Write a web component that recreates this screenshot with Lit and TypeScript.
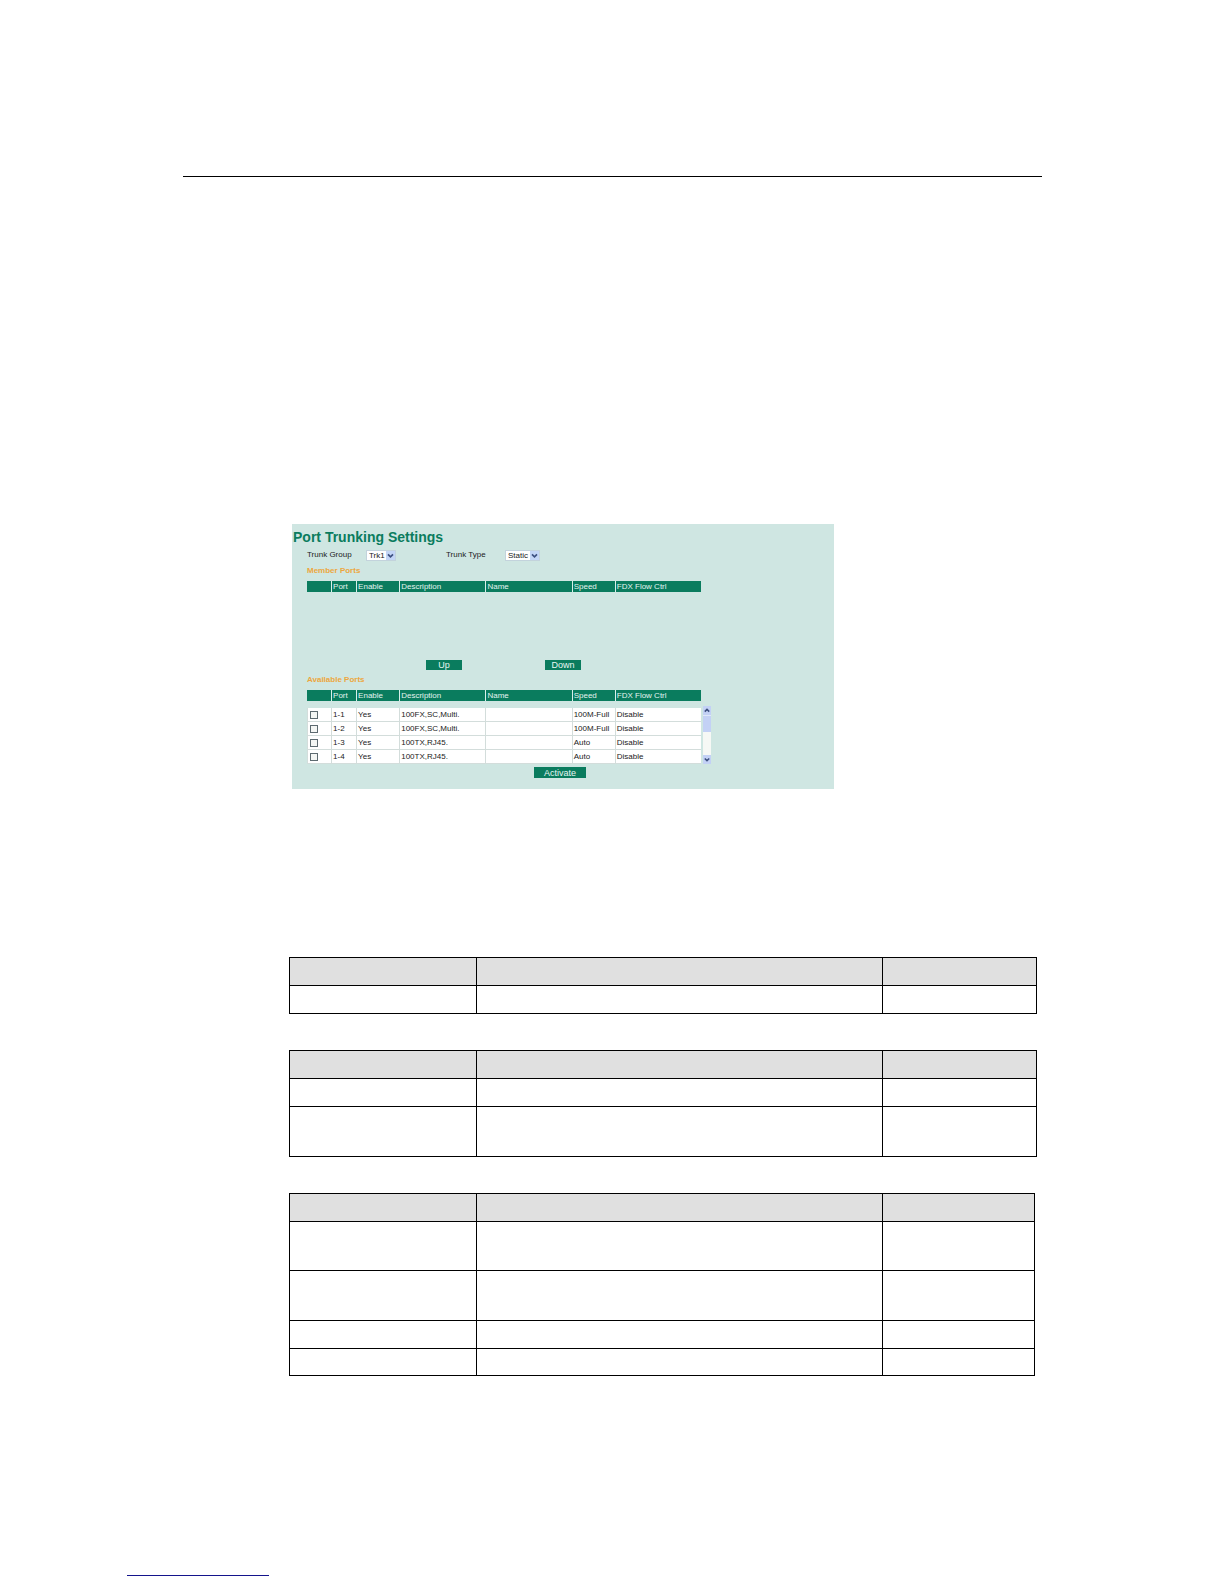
import { LitElement, html, css } from "lit";
import { customElement, property } from "lit/decorators.js";

interface PortRow {
  port: string;
  enable: string;
  description: string;
  name: string;
  speed: string;
  flow: string;
}

const PORTS: PortRow[] = [
  { port: "1-1", enable: "Yes", description: "100FX,SC,Multi.", name: "", speed: "100M-Full", flow: "Disable" },
  { port: "1-2", enable: "Yes", description: "100FX,SC,Multi.", name: "", speed: "100M-Full", flow: "Disable" },
  { port: "1-3", enable: "Yes", description: "100TX,RJ45.", name: "", speed: "Auto", flow: "Disable" },
  { port: "1-4", enable: "Yes", description: "100TX,RJ45.", name: "", speed: "Auto", flow: "Disable" },
];

const COLUMNS = ["", "Port", "Enable", "Description", "Name", "Speed", "FDX Flow Ctrl"];
const COLUMN_CLASSES = ["c-check", "c-port", "c-small", "c-wide", "c-wide", "c-small", "c-wide"];

@customElement("trunk-panel")
class TrunkPanel extends LitElement {
  static styles = css`
    :host {
      display: block;
      box-sizing: border-box;
      padding: 3px 0 11px 1px;
      background: #cfe6e2;
      color: #222;
      font-family: "Liberation Sans", Arial, sans-serif;
      font-size: 8px;
    }
    .title {
      margin: 0;
      font-size: 14px;
      line-height: 20px;
      font-weight: bold;
      color: #0a7c5e;
    }
    .body {
      margin-left: 14px;
      width: 405px;
      max-width: 100%;
    }
    .fields {
      display: flex;
      margin-top: 2px;
      align-items: center;
      height: 12px;
    }
    .label {
      width: 59px;
      line-height: 12px;
    }
    .pick {
      position: relative;
      height: 11px;
      margin-right: 50px;
    }
    .pick select {
      appearance: none;
      display: block;
      border: 1px solid #c3d3dc;
      border-radius: 0;
      margin: 0;
      padding: 0 9px 0 2px;
      background: #fff;
      color: #222;
      font: 8px/9px "Liberation Sans", Arial, sans-serif;
      height: 11px;
    }
    .s-group { width: 30px; }
    .s-type { width: 35px; }
    .chev {
      position: absolute;
      right: 1px;
      top: 1px;
      width: 9px;
      height: 9px;
      background: #c3d5f6;
      pointer-events: none;
    }
    .section {
      margin: 4px 0;
      font-size: 8px;
      line-height: 12px;
      font-weight: bold;
      color: #eda640;
    }
    table {
      table-layout: fixed;
      border-spacing: 0;
      width: 394px;
    }
    th, td {
      box-sizing: border-box;
      padding: 0 0 0 1px;
      text-align: left;
      white-space: nowrap;
      font-weight: normal;
    }
    .c-check { width: 24px; }
    .c-port { width: 25px; }
    .c-small { width: 43px; }
    .c-wide { width: 86px; }
    th {
      height: 11px;
      line-height: 11px;
      background: #0a7c5e;
      color: #e2f3ee;
      border-left: 1px solid #d8efe9;
    }
    th:first-child { border-left: 0; }
    td {
      height: 14px;
      line-height: 13px;
      background: #fff;
      border-left: 1px solid #d3dddb;
      border-bottom: 1px solid #d3dddb;
    }
    .members { min-height: 68px; }
    .moves {
      display: flex;
      gap: 83px;
      padding-left: 119px;
    }
    button {
      border: 0;
      margin: 0;
      padding: 0;
      background: #0a7c5e;
      color: #e8f7f3;
      font: 9px/10px "Liberation Sans", Arial, sans-serif;
    }
    .move {
      width: 36px;
      height: 10px;
    }
    .list {
      display: flex;
      gap: 2px;
      margin-top: 5px;
      align-items: flex-start;
    }
    .rows { margin-top: 2px; }
    .tick {
      appearance: none;
      display: block;
      box-sizing: border-box;
      width: 8px;
      height: 8px;
      margin: 0 0 0 1px;
      border: 1px solid #5d6a70;
      background: #f4f6f4;
    }
    .bar {
      display: flex;
      flex-direction: column;
      width: 8px;
      height: 58px;
      background: #f6f8f5;
    }
    .arrow, .thumb { background: #c3d1f5; }
    .arrow {
      display: block;
      width: 8px;
      height: 9px;
    }
    .thumb { height: 17px; border-top: 1px solid #dfe8fa; box-sizing: border-box; }
    .bar .arrow:last-child { margin-top: auto; }
    .apply {
      display: block;
      margin: 3px 0 0 227px;
      width: 52px;
      height: 11px;
    }
    svg { display: block; }
  `;

  private head() {
    return html`<thead><tr>${COLUMNS.map((c, i) => html`<th scope="col" class=${COLUMN_CLASSES[i]}>${c}</th>`)}</tr></thead>`;
  }

  private chevron(up = false) {
    return html`<svg viewBox="0 0 9 9" width="100%" height="100%" aria-hidden="true">
      <path d=${up ? "M2 5.8 4.5 3.3 7 5.8" : "M2 3.3 4.5 5.8 7 3.3"} fill="none" stroke="#3d5080" stroke-width="1.7"></path>
    </svg>`;
  }

  render() {
    return html`
      <h1 class="title">Port Trunking Settings</h1>
      <div class="body">
        <div class="fields">
          <label class="label" for="group">Trunk Group</label>
          <div class="pick">
            <select id="group" class="s-group"><option>Trk1</option></select>
            <span class="chev">${this.chevron()}</span>
          </div>
          <label class="label" for="type">Trunk Type</label>
          <div class="pick">
            <select id="type" class="s-type"><option>Static</option></select>
            <span class="chev">${this.chevron()}</span>
          </div>
        </div>
        <h2 class="section">Member Ports</h2>
        <table>${this.head()}</table>
        <div class="members"></div>
        <div class="moves">
          <button class="move">Up</button>
          <button class="move">Down</button>
        </div>
        <h2 class="section">Available Ports</h2>
        <table>${this.head()}</table>
        <div class="list">
          <table class="rows">
            <tbody>
              ${PORTS.map(
                (p) => html`<tr>
                  <td class="c-check"><input class="tick" type="checkbox" aria-label=${p.port} /></td>
                  <td class="c-port">${p.port}</td>
                  <td class="c-small">${p.enable}</td>
                  <td class="c-wide">${p.description}</td>
                  <td class="c-wide">${p.name}</td>
                  <td class="c-small">${p.speed}</td>
                  <td class="c-wide">${p.flow}</td>
                </tr>`
              )}
            </tbody>
          </table>
          <div class="bar">
            <button class="arrow" aria-label="Up">${this.chevron(true)}</button>
            <div class="thumb"></div>
            <button class="arrow" aria-label="Down">${this.chevron()}</button>
          </div>
        </div>
        <button class="apply">Activate</button>
      </div>
    `;
  }
}

@customElement("ruled-table")
class RuledTable extends LitElement {
  @property({ attribute: false }) rows: string[] = [];
  @property({ type: Boolean, reflect: true }) compact = false;

  static styles = css`
    :host { display: block; }
    :host([compact]) { margin-right: 2px; }
    table {
      table-layout: fixed;
      width: 100%;
      border-spacing: 0;
      border-right: 1px solid #000;
      border-bottom: 1px solid #000;
    }
    th, td {
      box-sizing: border-box;
      padding: 0;
      border-left: 1px solid #000;
      border-top: 1px solid #000;
    }
    th { height: 28px; background: #e0e0e0; }
    .first { width: 187px; }
    .last { width: 154px; }
    :host([compact]) .last { width: 152px; }
    .one td { height: 28px; }
    .end td { height: 27px; }
    .two td { height: 50px; }
    .snug td { height: 49px; }
  `;

  render() {
    return html`<table>
      <thead>
        <tr><th class="first"></th><th></th><th class="last"></th></tr>
      </thead>
      <tbody>
        ${this.rows.map((r) => html`<tr class=${r}><td></td><td></td><td></td></tr>`)}
      </tbody>
    </table>`;
  }
}

@customElement("app-root")
class AppRoot extends LitElement {
  static styles = css`
    :host {
      display: block;
      box-sizing: border-box;
      min-height: 100vh;
      padding: 176px 182px 8px 183px;
      background: #fff;
    }
    .rule {
      margin: 0;
      border: 0;
      border-top: 1px solid #000;
    }
    .content {
      margin: 347px 5px 0 106px;
    }
    .panel {
      max-width: 542px;
      margin-left: 3px;
    }
    .tables {
      display: flex;
      flex-direction: column;
      gap: 36px;
      margin-top: 168px;
    }
    .foot {
      width: 142px;
      margin: 199px 0 0 -56px;
      border: 0;
      border-top: 1px solid #14148c;
    }
  `;

  render() {
    return html`
      <hr class="rule" />
      <main class="content">
        <trunk-panel class="panel"></trunk-panel>
        <div class="tables">
          <ruled-table .rows=${["one"]}></ruled-table>
          <ruled-table .rows=${["one", "two"]}></ruled-table>
          <ruled-table compact .rows=${["snug", "two", "one", "end"]}></ruled-table>
        </div>
      </main>
      <hr class="foot" />
    `;
  }
}
